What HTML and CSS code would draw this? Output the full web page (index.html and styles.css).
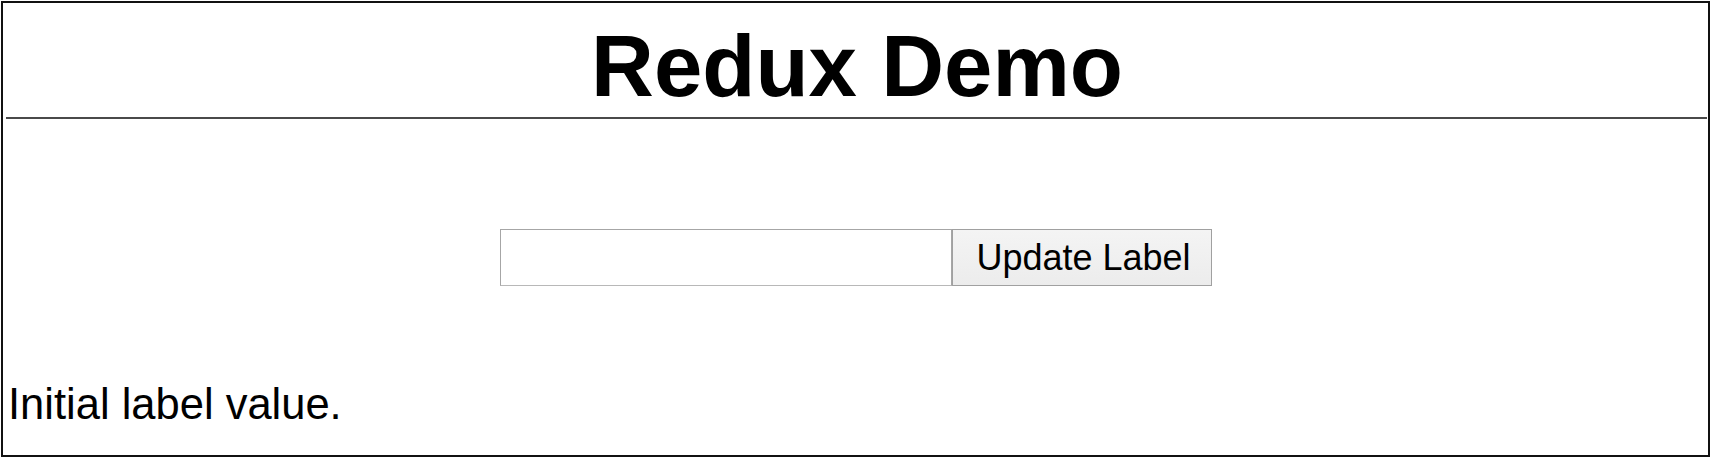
FILE: index.html
```html
<!DOCTYPE html>
<html>
<head>
<meta charset="utf-8">
<title>Redux Demo</title>
<link rel="stylesheet" href="styles.css">
</head>
<body>
<div class="frame">
  <h1 class="title">Redux Demo</h1>
  <hr class="rule">
  <div class="form-row">
    <input class="text-input" type="text">
    <button class="update-btn" type="button">Update Label</button>
  </div>
  <p class="label">Initial label value.</p>
</div>
</body>
</html>
```

FILE: styles.css
```css
html, body {
  margin: 0;
  padding: 0;
  background: #ffffff;
}

body {
  font-family: "Liberation Sans", Arial, sans-serif;
  color: #000000;
}

.frame {
  margin: 1px 3px 1px 1px;
  height: 452px;
  border: 2px solid #111111;
  display: flex;
  flex-direction: column;
}

.title {
  margin: 13px 0 0 0;
  font-size: 87px;
  line-height: 100px;
  font-weight: bold;
  text-align: center;
  padding-left: 3px;
}

.rule {
  margin: 1px 1px 0 3px;
  height: 2px;
  border: 0;
  background: #4a4a4a;
}

.form-row {
  margin-top: 110px;
  display: flex;
  justify-content: center;
  height: 57px;
}

.text-input {
  box-sizing: border-box;
  width: 452px;
  height: 57px;
  margin: 0;
  border: 1px solid #a6a6a6;
  border-bottom-color: #b8b8b8;
  background: #ffffff;
  padding: 0 6px;
  font-size: 36px;
  font-family: "Liberation Sans", Arial, sans-serif;
}

.update-btn {
  box-sizing: border-box;
  width: 260px;
  height: 57px;
  margin: 0;
  border: 1px solid #a0a0a0;
  background: linear-gradient(#f4f4f4, #ececec);
  font-size: 36px;
  font-family: "Liberation Sans", Arial, sans-serif;
  color: #000000;
  padding: 0 0 0 4px;
  white-space: nowrap;
  line-height: 55px;
  text-align: center;
}

.label {
  margin: 93px 0 0 0;
  padding-left: 5px;
  font-size: 43.5px;
  line-height: 50px;
}
```
